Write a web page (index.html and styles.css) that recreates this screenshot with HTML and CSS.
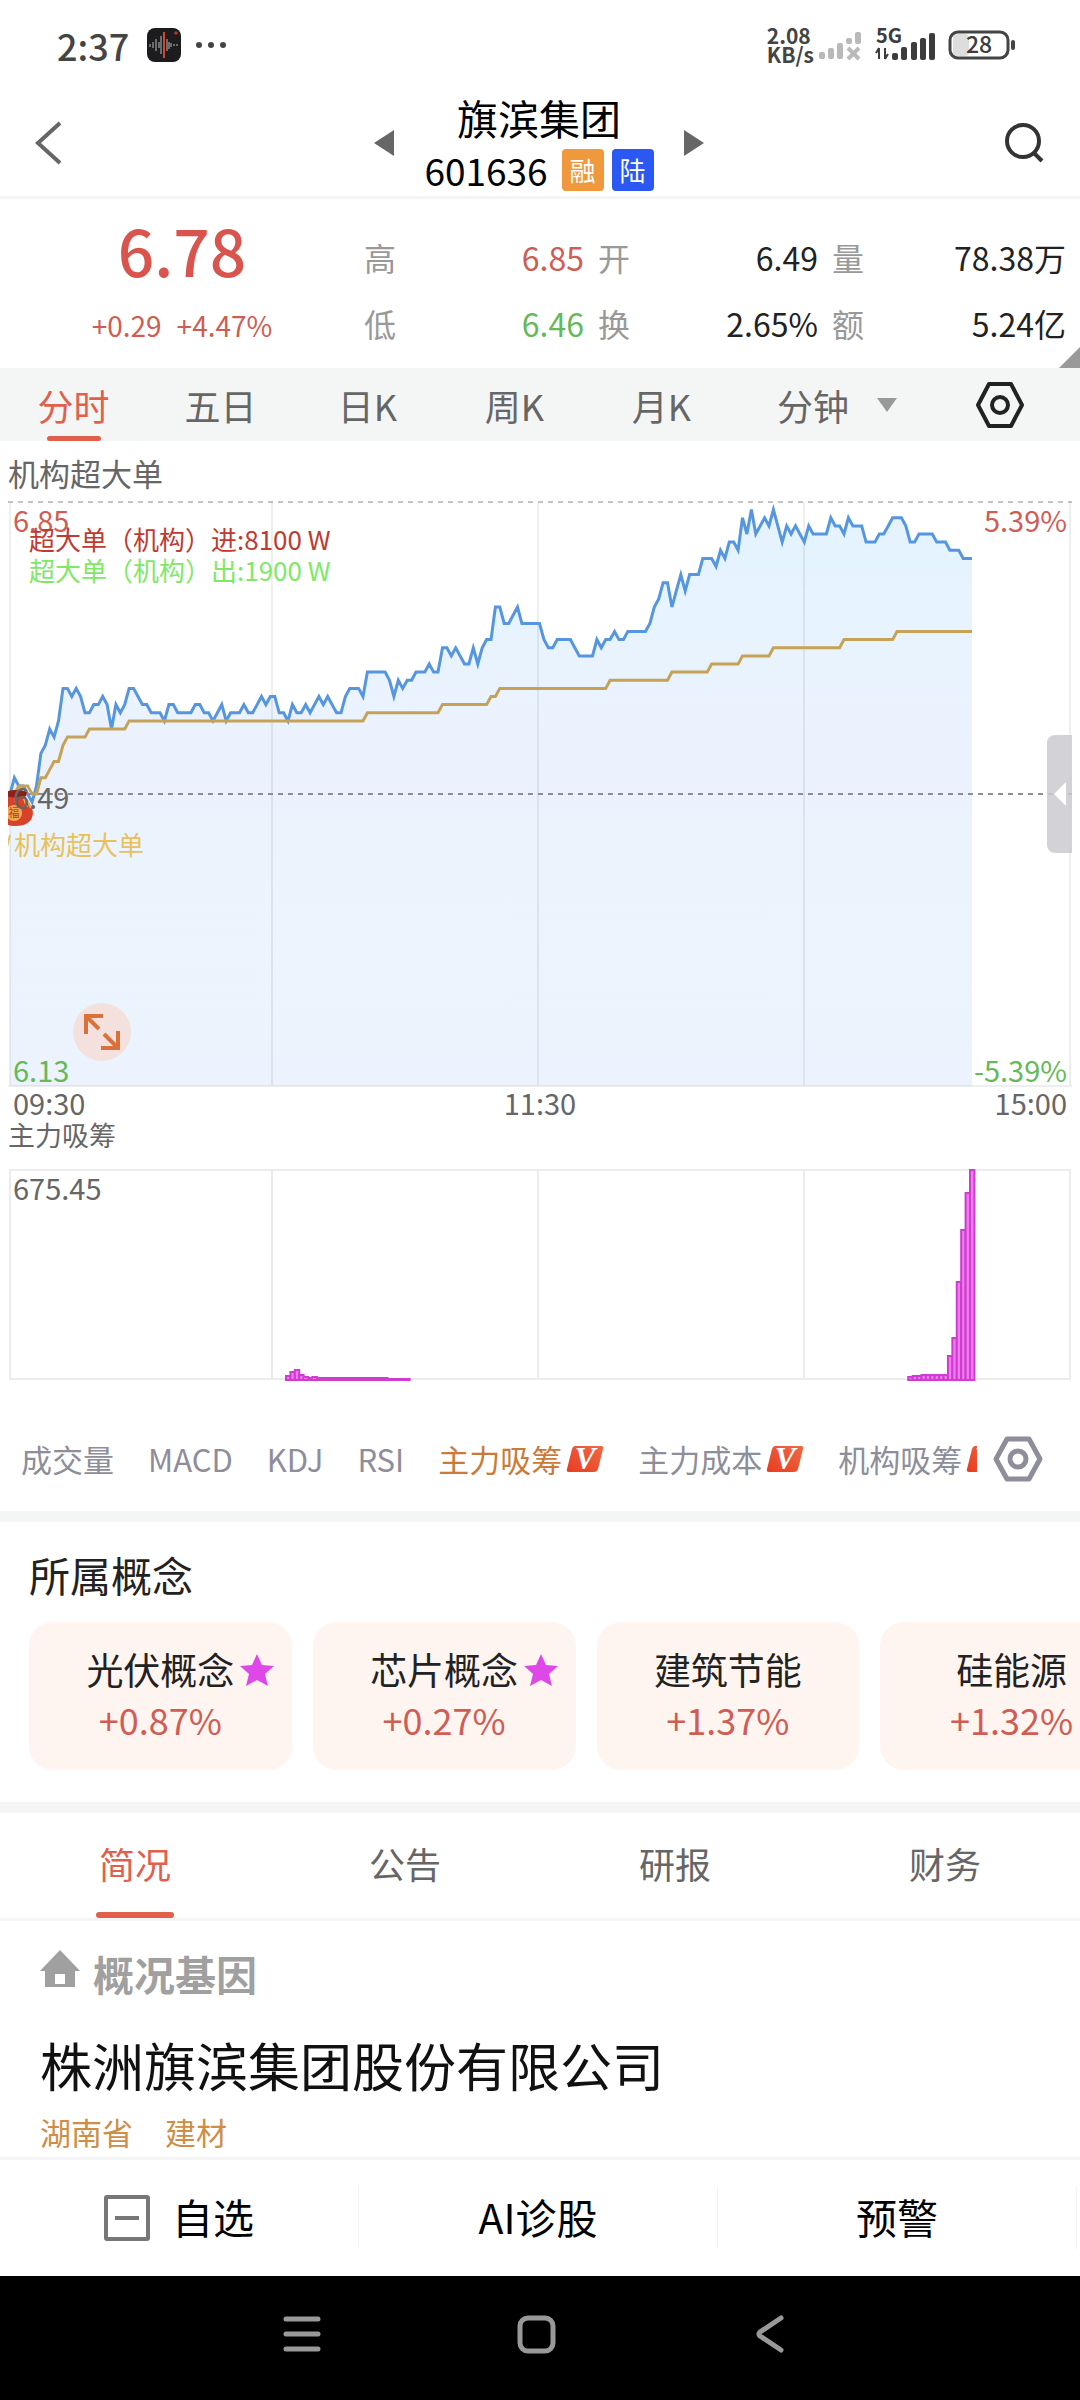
FILE: index.html
```
<!DOCTYPE html>
<html lang="zh-CN">
<head>
    <meta charset="UTF-8">
    <meta name="viewport" content="width=device-width, initial-scale=1.0">
    <title>旗滨集团 601636</title>
    <link rel="stylesheet" href="styles.css">
</head>
<body>
    <div class="status-bar">
        <span class="clock">2:37</span>
        <svg class="app-icon" width="34" height="34" viewBox="0 0 34 34">
            <rect width="34" height="34" rx="8" fill="#1c1c1e"/>
            <path d="M3 16v3M6 14v6M9 11v12M12 14v6M14 8v18M20 11v12M22 14v7M24 15v4M27 16v2M30 16v2" stroke="#bbb" stroke-width="1"/>
            <path d="M17 4v26" stroke="#d8432c" stroke-width="2"/>
            <path d="M27 5h4M29 3v4" stroke="#d8432c" stroke-width="1"/>
        </svg>
        <svg width="32" height="8" viewBox="0 0 32 8" fill="#444">
            <circle cx="4" cy="4" r="3"/><circle cx="16" cy="4" r="3"/><circle cx="28" cy="4" r="3"/>
        </svg>
        <div class="status-right">
            <span class="net-speed">2.08<br>KB/s</span>
            <svg width="44" height="30" viewBox="0 0 44 30" fill="#b9b9b9">
                <rect x="1" y="22" width="6" height="7" rx="2"/>
                <rect x="10" y="18" width="6" height="11" rx="2"/>
                <rect x="19" y="13" width="6" height="16" rx="2"/>
                <rect x="28" y="8" width="6" height="6" rx="2"/>
                <rect x="37" y="2" width="6" height="12" rx="2"/>
                <path d="M30 18l11 11M41 18l-11 11" stroke="#b9b9b9" stroke-width="4"/>
            </svg>
            <svg class="signal" width="60" height="34" viewBox="0 0 60 34" fill="#3c3c3c">
                <text x="0" y="15" font-size="20" font-weight="700">5G</text>
                <path d="M3 20v11M0 25l3-5M9 20v11M12 26l-3 5" stroke="#3c3c3c" stroke-width="2" fill="none"/>
                <rect x="16" y="25" width="6" height="7" rx="2"/>
                <rect x="25" y="19" width="6" height="13" rx="2"/>
                <rect x="35" y="14" width="6" height="18" rx="2"/>
                <rect x="44" y="10" width="6" height="22" rx="2"/>
                <rect x="53" y="5" width="6" height="27" rx="2"/>
            </svg>
            <svg width="68" height="30" viewBox="0 0 68 30">
                <rect x="5" y="4" width="16" height="22" rx="4" fill="#ddd"/>
                <rect x="2" y="2" width="58" height="26" rx="8" fill="none" stroke="#444" stroke-width="3"/>
                <rect x="63" y="10" width="4" height="10" rx="2" fill="#444"/>
                <text x="31" y="23" font-size="23" font-weight="500" text-anchor="middle" fill="#3c3c3c">28</text>
            </svg>
        </div>
    </div>

    <header class="header">
        <button class="icon-btn back" aria-label="返回">
            <svg width="30" height="44" viewBox="0 0 30 44" fill="none" stroke="#666" stroke-width="4"><path d="M26 2L4 22l22 20"/></svg>
        </button>
        <div class="stock-switch">
            <button class="icon-btn" aria-label="上一只"><svg width="20" height="26" viewBox="0 0 20 26"><path d="M20 0v26L0 13z" fill="#666"/></svg></button>
            <div class="stock">
                <h1>旗滨集团</h1>
                <div class="stock-code">
                    <span>601636</span>
                    <span class="badge badge-rong">融</span>
                    <span class="badge badge-lu">陆</span>
                </div>
            </div>
            <button class="icon-btn" aria-label="下一只"><svg width="20" height="26" viewBox="0 0 20 26"><path d="M0 0v26l20-13z" fill="#666"/></svg></button>
        </div>
        <button class="icon-btn search" aria-label="搜索">
            <svg width="40" height="40" viewBox="0 0 40 40" fill="none" stroke="#333" stroke-width="4"><circle cx="19" cy="18" r="16"/><path d="M30 30l8 8"/></svg>
        </button>
    </header>

    <section class="quote">
        <div class="price">
            <div class="price-now">6.78</div>
            <div class="price-change"><span>+0.29</span><span>+4.47%</span></div>
        </div>
        <dl class="stats">
            <div><dt>高</dt><dd class="up">6.85</dd></div>
            <div><dt>开</dt><dd>6.49</dd></div>
            <div><dt>量</dt><dd>78.38万</dd></div>
            <div><dt>低</dt><dd class="down">6.46</dd></div>
            <div><dt>换</dt><dd>2.65%</dd></div>
            <div><dt>额</dt><dd>5.24亿</dd></div>
        </dl>
        <svg class="corner" width="21" height="21" viewBox="0 0 21 21"><path d="M21 0v21H0z" fill="#999"/></svg>
    </section>

    <nav class="period-tabs">
        <button class="active">分时</button>
        <button>五日</button>
        <button>日K</button>
        <button>周K</button>
        <button>月K</button>
        <div class="minute">
            <select aria-label="分钟周期"><option>分钟</option></select>
            <svg width="20" height="14" viewBox="0 0 20 14"><path d="M0 0h20L10 14z" fill="#999"/></svg>
        </div>
        <button class="settings" aria-label="图表设置">
            <svg width="48" height="46" viewBox="0 0 48 46" fill="none" stroke="#222" stroke-width="4" stroke-linejoin="round"><path d="M13 2h22l11 21-11 21H13L2 23z"/><circle cx="24" cy="23" r="8"/></svg>
        </button>
    </nav>

    <section class="charts">
        <h2 class="chart-title">机构超大单</h2>
        <div class="main-chart">
            <svg viewBox="0 0 1080 619">
                <defs>
                    <linearGradient id="area-fill" gradientUnits="userSpaceOnUse" x1="0" y1="0" x2="0" y2="585">
                        <stop offset="0" stop-color="#e4f3fe"/>
                        <stop offset="0.3" stop-color="#e9f3fe"/>
                        <stop offset="0.4" stop-color="#ebf2fe"/>
                        <stop offset="0.5" stop-color="#ebf1fd"/>
                        <stop offset="0.55" stop-color="#ebf4fd"/>
                        <stop offset="1" stop-color="#ecf3fe"/>
                    </linearGradient>
                    <clipPath id="plot"><rect x="8" y="0" width="1064" height="619"/></clipPath>
                </defs>
                <g clip-path="url(#plot)">
                    <path id="area" fill="url(#area-fill)"/>
                    <path d="M10 1V585M272 1V585M538 1V585M804 1V585M1070 1V585M8 585H1072" fill="none" stroke="#14283c" stroke-opacity="0.08" stroke-width="2"/>
                    <path d="M8 1H1072" stroke="#888" stroke-dasharray="5 5"/>
                    <path d="M8 293H1072" stroke="#8d8d96" stroke-width="2" stroke-dasharray="5 5"/>
                    <path id="price-line" fill="none" stroke="#5696e0" stroke-width="3"/>
                    <path id="avg-line" fill="none" stroke="#c6a257" stroke-width="3"/>
                    <!-- lucky bag marker -->
                    <path d="M6 291q10-4 21 0l-2 6q8 8 8 15-1 13-18 13-9 0-12-5z" fill="#d8412a"/>
                    <path d="M6 291q10-4 21 0l-1 4q-10 3-20 0z" fill="#8e1f14"/>
                    <path d="M24 298l3 8M27 299l4 8" stroke="#f0b45c" stroke-width="2"/>
                    <circle cx="14" cy="312" r="8" fill="#f3a94f"/>
                    <text x="14" y="316" font-size="11" text-anchor="middle" fill="#c73522">福</text>
                    <path d="M10 334l-3 12" stroke="#e8c15a" stroke-width="2"/>
                </g>
                <g class="axis">
                    <text x="13" y="31" class="red">6.85</text>
                    <text x="1067" y="31" class="red end">5.39%</text>
                    <text x="13" y="308">6.49</text>
                    <text x="13" y="581" class="green">6.13</text>
                    <text x="1067" y="581" class="green end">-5.39%</text>
                    <text x="13" y="614">09:30</text>
                    <text x="540" y="614" class="middle">11:30</text>
                    <text x="1067" y="614" class="end">15:00</text>
                </g>
                <g class="legend">
                    <text x="29" y="49" fill="#c03a30">超大单（机构）进:8100 W</text>
                    <text x="29" y="80" fill="#80e868">超大单（机构）出:1900 W</text>
                    <text x="14" y="354" fill="#e8c15a">机构超大单</text>
                </g>
            </svg>
            <button class="expand-btn" aria-label="全屏">
                <svg width="36" height="36" viewBox="0 0 36 36" fill="none" stroke="#d9713a" stroke-width="4"><path d="M2 20V2h17M2 2l13 13M34 17v17H17M34 34L20 20"/></svg>
            </button>
            <button class="drawer-btn" aria-label="展开盘口">
                <svg width="12" height="24" viewBox="0 0 12 24"><path d="M12 0v24L0 12z" fill="#fff"/></svg>
            </button>
        </div>
        <h2 class="sub-title">主力吸筹</h2>
        <svg class="sub-chart" viewBox="0 0 1080 212">
            <path d="M10 2V211M272 2V211M538 2V211M804 2V211M1070 2V211M9 2H1071M9 211H1071" fill="none" stroke="#ececec" stroke-width="2"/>
            <g id="bars" fill="#f07aee" stroke="#d03cd2" stroke-width="2"></g>
            <g class="axis"><text x="13" y="32">675.45</text></g>
        </svg>
        <div class="indicators">
            <div class="indicator-list">
                <button>成交量</button>
                <button>MACD</button>
                <button>KDJ</button>
                <button>RSI</button>
                <button class="active">主力吸筹<svg class="vip"><use href="#vip"/></svg></button>
                <button>主力成本<svg class="vip"><use href="#vip"/></svg></button>
                <button>机构吸筹<svg class="vip"><use href="#vip"/></svg></button>
            </div>
            <button class="icon-btn" aria-label="指标设置">
                <svg width="50" height="46" viewBox="0 0 50 46" fill="none" stroke="#8e8d9a" stroke-width="5" stroke-linejoin="round"><path d="M14 3h22l11 20-11 20H14L3 23z"/><circle cx="25" cy="23" r="8"/></svg>
            </button>
        </div>
    </section>

    <section class="concepts">
        <h2>所属概念</h2>
        <div class="concept-list">
            <a class="concept" href="#">
                <span class="concept-name">光伏概念<svg class="star"><use href="#star"/></svg></span>
                <span class="concept-pct">+0.87%</span>
            </a>
            <a class="concept" href="#">
                <span class="concept-name">芯片概念<svg class="star"><use href="#star"/></svg></span>
                <span class="concept-pct">+0.27%</span>
            </a>
            <a class="concept" href="#">
                <span class="concept-name">建筑节能</span>
                <span class="concept-pct">+1.37%</span>
            </a>
            <a class="concept" href="#">
                <span class="concept-name">硅能源</span>
                <span class="concept-pct">+1.32%</span>
            </a>
        </div>
    </section>

    <nav class="info-tabs">
        <button class="active">简况</button>
        <button>公告</button>
        <button>研报</button>
        <button>财务</button>
    </nav>

    <section class="profile">
        <h2>
            <svg width="40" height="38" viewBox="0 0 40 38"><path d="M20 0l20 21h-5v16H25V24H15v13H5V21H0z" fill="#a0a0a0"/><path d="M15 34h10v3H15z" fill="#a0a0a0"/></svg>
            概况基因
        </h2>
        <h3>株洲旗滨集团股份有限公司</h3>
        <p class="tags"><span>湖南省</span><span>建材</span></p>
    </section>

    <footer class="actions">
        <button>
            <svg width="46" height="46" viewBox="0 0 46 46" fill="none" stroke="#777" stroke-width="4"><rect x="2" y="2" width="42" height="42" rx="1"/><path d="M11 23h24"/></svg>
            <span>自选</span>
        </button>
        <button><span>AI诊股</span></button>
        <button><span>预警</span></button>
    </footer>

    <div class="nav-bar">
        <button class="icon-btn" aria-label="最近任务"><svg width="38" height="38" viewBox="0 0 38 38" stroke="#999" stroke-width="5" stroke-linecap="round"><path d="M3 4h32M3 19h32M3 34h32"/></svg></button>
        <button class="icon-btn" aria-label="主页"><svg width="38" height="38" viewBox="0 0 38 38" fill="none" stroke="#999" stroke-width="5"><rect x="3" y="3" width="33" height="33" rx="8"/></svg></button>
        <button class="icon-btn" aria-label="返回"><svg width="38" height="38" viewBox="0 0 38 38" fill="none" stroke="#999" stroke-width="5" stroke-linecap="round" stroke-linejoin="round"><path d="M30 3L9 17q-2 2 0 4l21 14"/></svg></button>
    </div>

    <svg class="symbols">
        <symbol id="vip" viewBox="0 0 38 28">
            <linearGradient id="vip-bg" x1="0" y1="1" x2="1" y2="0">
                <stop offset="0" stop-color="#e93c20"/>
                <stop offset="1" stop-color="#ee6a45"/>
            </linearGradient>
            <path d="M9 1h26q3 0 2 3l-5 20q-1 3-4 3H3q-3 0-2-3L6 4q1-3 3-3z" fill="url(#vip-bg)"/>
            <text class="vip-letter" x="19" y="24" text-anchor="middle" fill="#fff">V</text>
        </symbol>
        <symbol id="star" viewBox="0 0 34 32">
            <path d="M17 0l5 11 12 1-9 8 3 12-11-6-11 6 3-12-9-8 12-1z" fill="#df48e8"/>
        </symbol>
    </svg>

    <script src="chart.js"></script>
</body>
</html>
```
FILE: styles.css
```
* {
    box-sizing: border-box;
}

body {
    margin: 0;
    background-color: #fff;
    color: #222;
    font-family: "Noto Sans CJK SC", sans-serif;
    font-size: 31px;
}

h1, h2, h3, p, dl, dd {
    margin: 0;
    font-weight: 400;
}

button, select {
    padding: 0;
    border: none;
    background: none;
    color: inherit;
    font: inherit;
    cursor: pointer;
}

svg {
    display: block;
    overflow: visible;
}

a {
    color: inherit;
    text-decoration: none;
}

.symbols {
    position: absolute;
    top: 0;
    width: 0;
    height: 0;
}

.icon-btn {
    display: flex;
    align-items: center;
    justify-content: center;
}

/* status bar */
.status-bar {
    display: flex;
    align-items: center;
    height: 90px;
    padding: 0 64px 0 57px;
    color: #444;
}

.clock {
    font-size: 36px;
    font-weight: 500;
}

.app-icon {
    margin: 0 14px 0 18px;
}

.status-right {
    display: flex;
    align-items: center;
    gap: 4px;
    margin-left: auto;
}

.signal {
    margin: 0 8px 0 10px;
}

.net-speed {
    font-size: 21px;
    font-weight: 700;
    line-height: 19px;
}

/* header */
.header {
    display: grid;
    grid-template-columns: 1fr auto 1fr;
    align-items: center;
    padding: 0 36px 0 34px;
    border-bottom: 3px solid #f4f4f4;
    color: #000;
}

.back {
    justify-self: start;
}

.search {
    justify-self: end;
}

.stock-switch {
    display: flex;
    align-items: center;
    gap: 30px;
}

.stock {
    text-align: center;
}

.stock h1 {
    font-size: 41px;
    line-height: 54px;
}

.stock-code {
    display: flex;
    align-items: center;
    gap: 8px;
    height: 52px;
    font-size: 37px;
}

.stock-code span:first-child {
    margin-right: 6px;
}

.badge {
    width: 42px;
    border-radius: 4px;
    color: #fff;
    font-size: 26px;
    line-height: 42px;
}

.badge-rong {
    background-color: #ef983c;
}

.badge-lu {
    background-color: #2b58f2;
}

/* quote */
.quote {
    position: relative;
    display: flex;
    align-items: flex-start;
    padding: 13px 14px 4px 0;
}

.price {
    flex: 364;
    color: #d9544d;
    text-align: center;
}

.price-now {
    font-size: 64px;
    font-weight: 500;
    line-height: 74px;
}

.price-change {
    display: flex;
    justify-content: center;
    gap: 15px;
    font-size: 28px;
    line-height: 78px;
    color: #cf5d54;
}

.stats {
    flex: 702;
    display: grid;
    grid-template-columns: 220fr 220fr 234fr;
    column-gap: 14px;
    padding-top: 12px;
    font-size: 32px;
    line-height: 66px;
}

.stats div {
    display: flex;
    justify-content: space-between;
}

.stats dt {
    color: #999;
}

.up {
    color: #cf5d54;
}

.down {
    color: #66b958;
}

.corner {
    position: absolute;
    right: 0;
    bottom: 0;
}

/* period tabs */
.period-tabs {
    display: grid;
    grid-template-columns: repeat(5, 147fr) 241fr 104fr;
    height: 73px;
    background-color: #f4f6f5;
    color: #666;
    font-size: 36px;
}

.period-tabs .active,
.info-tabs .active {
    position: relative;
    color: #e0604c;
}

.period-tabs .active::after,
.info-tabs .active::after {
    content: "";
    position: absolute;
    bottom: 0;
    left: 50%;
    width: 54px;
    height: 5px;
    border-radius: 3px;
    background-color: #e0604c;
    transform: translateX(-50%);
}

.minute {
    display: flex;
    align-items: center;
    gap: 26px;
    padding-left: 42px;
}

.minute select {
    appearance: none;
    width: 74px;
}

/* charts */
.chart-title {
    padding: 4px 0 0 8px;
    color: #666;
    font-size: 31px;
    line-height: 56px;
}

.main-chart {
    position: relative;
}

.axis {
    fill: #666;
    font-size: 29px;
}

.axis .red {
    fill: #cf5d54;
}

.axis .green {
    fill: #66b958;
}

.axis .end {
    text-anchor: end;
}

.axis .middle {
    text-anchor: middle;
}

.legend {
    font-size: 26px;
}

.expand-btn {
    position: absolute;
    left: 73px;
    bottom: 59px;
    display: flex;
    align-items: center;
    justify-content: center;
    width: 58px;
    height: 58px;
    border-radius: 50%;
    background-color: #f4e1dd;
}

.drawer-btn {
    position: absolute;
    top: 234px;
    right: 8px;
    display: flex;
    align-items: center;
    justify-content: center;
    width: 25px;
    height: 118px;
    border-radius: 8px 0 0 8px;
    background-color: rgba(203, 202, 208, 0.85);
}

.sub-title {
    padding: 0 0 18px 8px;
    color: #666;
    font-size: 27px;
    line-height: 30px;
}

.indicators {
    display: flex;
    align-items: center;
    gap: 16px;
    padding: 26px 37px 0 21px;
    color: #8e8d9a;
}

.indicator-list {
    flex: 1;
    display: flex;
    gap: 34px;
    min-width: 0;
    overflow: hidden;
    white-space: nowrap;
    line-height: 105px;
}

.indicator-list button {
    display: flex;
    flex: none;
    align-items: center;
    gap: 4px;
}

.indicator-list .active {
    color: #cc7a38;
}

.vip {
    width: 38px;
    height: 28px;
}

.vip-letter {
    font-family: "Liberation Serif", serif;
    font-size: 31px;
    font-style: italic;
    font-weight: 700;
}

/* concepts */
.concepts {
    padding: 22px 0 32px 29px;
    border-top: 11px solid #f4f6f5;
    border-bottom: 11px solid #f4f6f5;
}

.concepts h2 {
    padding-bottom: 18px;
    font-size: 41px;
    line-height: 60px;
}

.concept-list {
    display: flex;
    gap: 21px;
    overflow: hidden;
}

.concept {
    display: flex;
    flex: none;
    flex-direction: column;
    align-items: center;
    width: 25%;
    padding: 22px 0 26px;
    border-radius: 24px;
    background-color: #fef5f1;
    font-size: 37px;
    line-height: 50px;
}

.concept-name {
    position: relative;
}

.star {
    position: absolute;
    top: 10px;
    left: 100%;
    width: 34px;
    height: 32px;
    margin-left: 6px;
}

.concept-pct {
    color: #cf5d54;
    font-size: 36px;
}

/* info tabs */
.info-tabs {
    display: grid;
    grid-template-columns: repeat(4, 1fr);
    height: 108px;
    border-bottom: 3px solid #f4f4f4;
    color: #666;
    font-size: 36px;
}

.info-tabs button {
    padding-bottom: 6px;
}

.info-tabs .active::after {
    width: 78px;
    height: 6px;
}

/* profile */
.profile {
    padding: 22px 40px 0;
}

.profile h2 {
    display: flex;
    align-items: center;
    gap: 13px;
    color: #a0a0a0;
    font-size: 41px;
    font-weight: 700;
    line-height: 60px;
}

.profile h2 svg {
    margin-bottom: 8px;
}

.profile h3 {
    padding-top: 18px;
    color: #111;
    font-size: 52px;
    line-height: 88px;
}

.tags {
    display: flex;
    gap: 32px;
    padding-bottom: 2px;
    color: #cf8d45;
    line-height: 46px;
}

/* bottom bar */
.actions {
    display: grid;
    grid-template-columns: repeat(3, 1fr);
    padding: 26px 3px 27px 0;
    border-top: 3px solid #f4f6f5;
    color: #000;
    font-size: 41px;
}

.actions button {
    display: flex;
    align-items: center;
    justify-content: center;
    gap: 22px;
    height: 63px;
    border-right: 1px solid #f4f4f4;
}

.actions span {
    padding-bottom: 4px;
}

.nav-bar {
    display: flex;
    justify-content: center;
    gap: 196px;
    padding: 39px 8px 47px 0;
    background-color: #000;
}
```
FILE: chart.js
```
// closing price per minute, in cents above the previous close (6.49)
const prices = [
    0, 2, 1, 1, 0, -1, 1, 5, 6, 8, 7, 9, 13, 13, 12, 13, 12, 10, 10, 11,
    11, 12, 11, 8, 11, 10, 11, 13, 13, 12, 11, 11, 10, 10, 10, 9, 11, 11, 10, 10,
    10, 10, 11, 11, 10, 10, 9, 10, 11, 9, 10, 10, 10, 11, 10, 10, 11, 12, 11, 12,
    12, 10, 10, 9, 11, 10, 10, 11, 10, 11, 12, 11, 12, 11, 10, 10, 12, 13, 13, 13,
    12, 15, 15, 15, 15, 15, 14, 12, 14, 13, 14, 14, 15, 15, 15, 16, 15, 15, 18, 18,
    17, 18, 17, 16, 16, 18, 16, 18, 19, 19, 23, 23, 21, 21, 22, 23, 21, 21, 21, 21,
    21, 19, 18, 18, 19, 19, 19, 19, 18, 17, 17, 17, 17, 19, 18, 19, 19, 20, 19, 19,
    20, 20, 20, 20, 20, 21, 23, 24, 26, 26, 23, 25, 27, 25, 27, 27, 27, 29, 29, 29,
    28, 30, 29, 31, 31, 30, 34, 32, 35, 32, 33, 34, 33, 35, 33, 31, 33, 32, 33, 32,
    31, 33, 32, 32, 32, 32, 34, 33, 33, 32, 34, 33, 33, 33, 31, 31, 31, 32, 32, 33,
    34, 34, 34, 33, 31, 31, 32, 32, 32, 32, 31, 31, 31, 30, 30, 30, 29, 29, 29
];

// average price: [first minute, value]
const averageSteps = [
    [0, 0], [2, 1], [5, 0], [7, 2], [9, 3], [10, 4], [12, 6], [13, 7], [18, 8], [27, 9],
    [81, 10], [98, 11], [109, 12], [111, 13], [136, 14], [150, 15], [159, 16],
    [166, 17], [173, 18], [189, 19], [201, 20]
];

const LEFT = 10;
const RIGHT = 972;
const STEP = (RIGHT - LEFT) / (prices.length - 1);
const MIDDLE = 293;
const CENT = 8.125;

function toPath(values) {
    return values.map((v, i) => {
        return (i ? 'L' : 'M') + (LEFT + i * STEP).toFixed(1) + ' ' + (MIDDLE - v * CENT).toFixed(1);
    }).join('');
}

const averages = prices.map((p, i) => averageSteps.filter(s => s[0] <= i).pop()[1]);
const line = toPath(prices);

document.getElementById('price-line').setAttribute('d', line);
document.getElementById('avg-line').setAttribute('d', toPath(averages));
document.getElementById('area').setAttribute('d', line + `V585H${LEFT}Z`);

// inflow bars: [first minute, heights]
const barGroups = [
    [63, [4, 8, 10, 5, 3, 2, 3, 2, 2, 2, 2, 2, 2, 2, 2, 2, 2, 2, 2, 2, 2, 2, 2, 1, 1, 1, 1, 1]],
    [204, [3, 4, 4, 5, 5, 5, 5, 5, 5, 24, 42, 98, 150, 187, 210]]
];

const bars = document.getElementById('bars');
barGroups.forEach(([start, heights]) => {
    heights.forEach((h, i) => {
        const rect = document.createElementNS('http://www.w3.org/2000/svg', 'rect');
        rect.setAttribute('x', LEFT - 2 + (start + i) * STEP);
        rect.setAttribute('y', 212 - h);
        rect.setAttribute('width', STEP);
        rect.setAttribute('height', h);
        bars.appendChild(rect);
    });
});
```
